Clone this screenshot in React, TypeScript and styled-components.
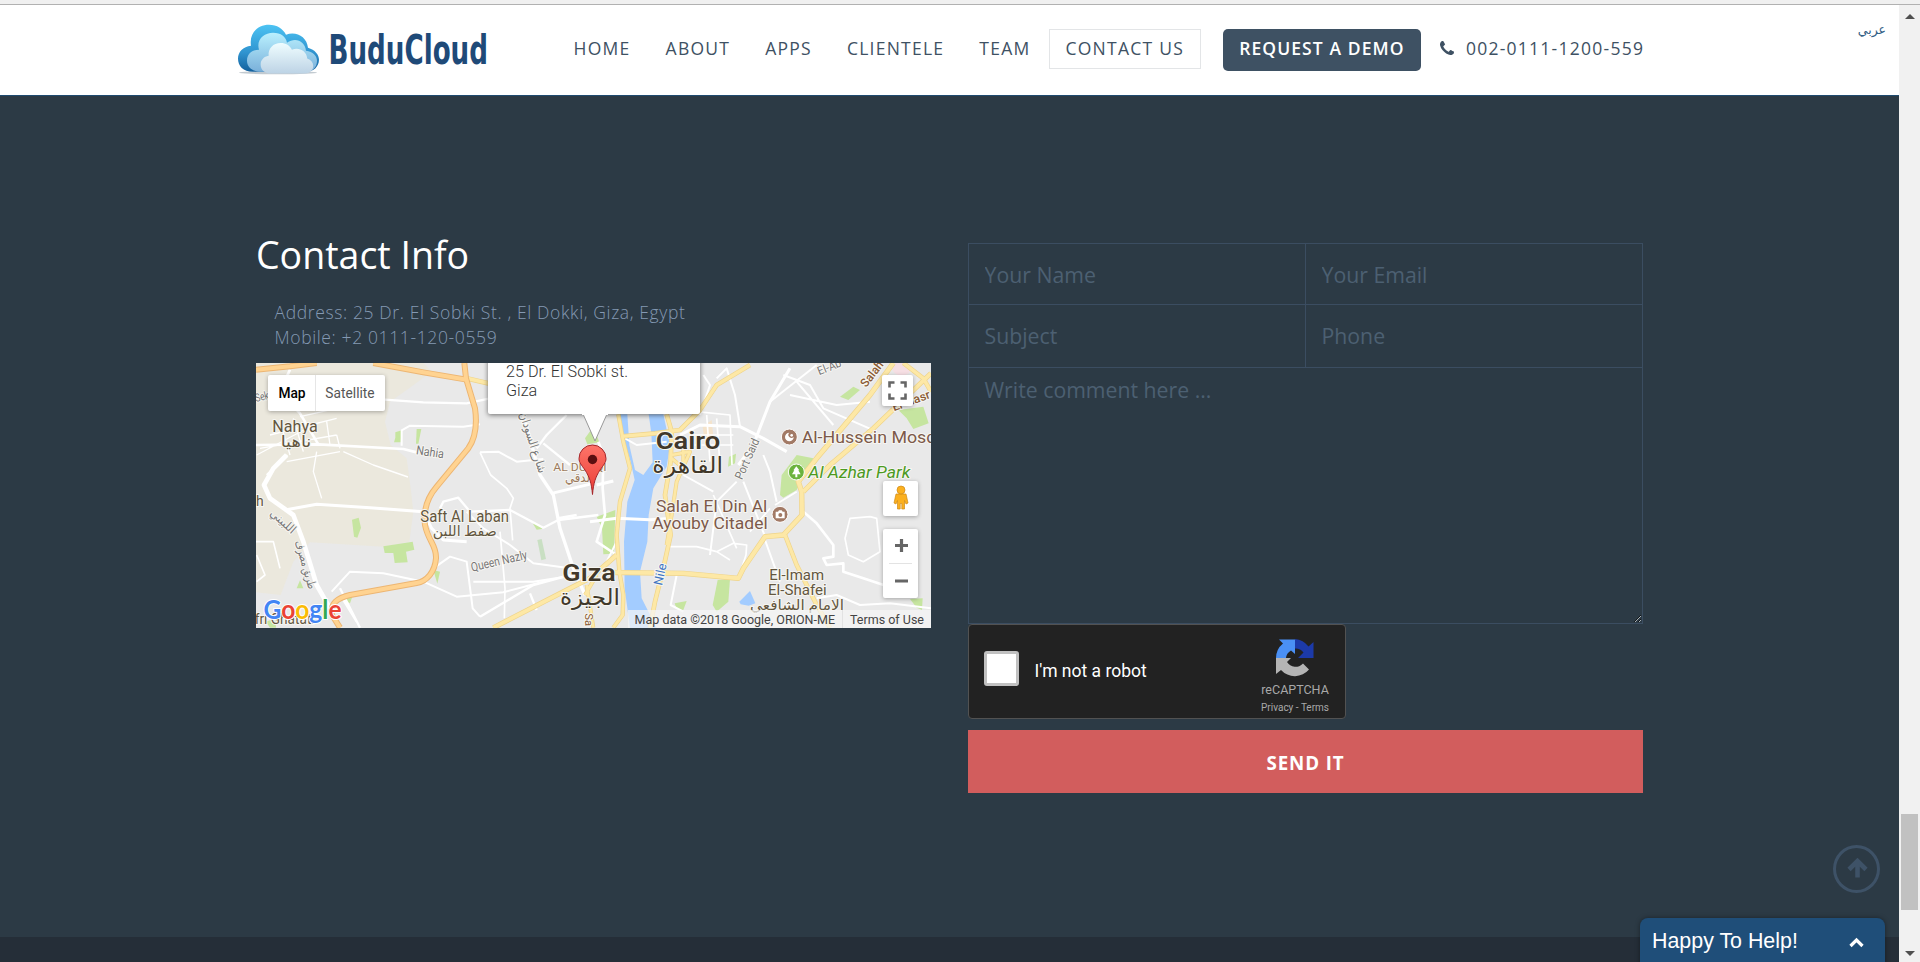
import React from "react";
import styled, { createGlobalStyle, css } from "styled-components";

const sans = `"Open Sans", "DejaVu Sans", sans-serif`;
const roboto = `Roboto, "DejaVu Sans", sans-serif`;

const GlobalStyle = createGlobalStyle`
  * { box-sizing: border-box; }
  html, body { margin: 0; padding: 0; overflow: hidden; background: #2c3a45; }
  body { font-family: ${sans}; }
`;

const Screen = styled.div`
  width: 1920px;
  height: 962px;
  overflow: hidden;
  display: flex;
  flex-direction: column;
`;
const TopStrip = styled.div`
  height: 5px;
  flex: none;
  background: #f0f0f0;
  border-bottom: 1px solid #b1b1b1;
`;
const Viewport = styled.div`
  flex: 1;
  display: flex;
  min-height: 0;
`;
const Page = styled.div`
  width: 1899px;
  position: relative;
  display: flex;
  flex-direction: column;
  background: #2c3a45;
`;

const Header = styled.header`
  height: 91px;
  flex: none;
  display: flex;
  align-items: flex-start;
  background: #fff;
  border-bottom: 1px solid #1f4b70;
  padding: 15px 13px 0 234px;
`;
const Brand = styled.a`
  display: block;
  width: 256px;
  height: 70px;
`;
const Nav = styled.nav`
  display: flex;
  gap: 1.8px;
  margin: 9px 0 0 67px;
`;
const navText = css`
  font-size: 17.5px;
  letter-spacing: 1.25px;
  color: #3e5163;
  white-space: nowrap;
`;
const NavItem = styled.a<{ $active?: boolean }>`
  ${navText}
  height: 40px;
  line-height: 37px;
  padding: 0 15.6px;
  font-weight: 500;
  border: 1px solid ${(p) => (p.$active ? "#e3e5e7" : "transparent")};
`;
const DemoButton = styled.a`
  ${navText}
  height: 42px;
  width: 198px;
  line-height: 39px;
  margin: 9px 0 0 22.3px;
  border-radius: 5px;
  background: #3e5163;
  color: #fff;
  font-weight: 650;
  letter-spacing: 1.1px;
  text-align: center;
`;
const Phone = styled.a`
  ${navText}
  display: flex;
  align-items: center;
  gap: 12px;
  margin: 9px 0 0 19px;
  height: 38px;
  font-weight: 500;
`;
const Language = styled.a`
  margin: 0 0 0 auto;
  font-family: "DejaVu Sans", sans-serif;
  font-size: 12.5px;
  line-height: 20px;
  color: #336085;
`;

const Content = styled.main`
  flex: 1;
  display: flex;
  padding: 125px 256px 0;
  gap: 37px;
`;
const Info = styled.section`
  width: 675px;
`;
const Title = styled.h3`
  margin: 8px 0 0;
  height: 52px;
  line-height: 52px;
  font-size: 37.5px;
  font-weight: 400;
  color: #fff;
`;
const Address = styled.p`
  margin: 19px 0 13px 18.5px;
  height: 50px;
  line-height: 25px;
  font-size: 17.5px;
  font-weight: 300;
  letter-spacing: 0.63px;
  color: #8499b3;
`;

const MapFrame = styled.div`
  position: relative;
  width: 675px;
  height: 265px;
  overflow: hidden;
  background: #e9e9e9;
  font-family: ${roboto};
`;
const MapArt = styled.svg`
  display: block;
`;
const MapTypes = styled.div`
  position: absolute;
  left: 12px;
  top: 12px;
  height: 36px;
  display: flex;
  background: #fff;
  border-radius: 2px;
  box-shadow: 0 1px 4px rgba(0, 0, 0, 0.3);
`;
const MapType = styled.span<{ $on?: boolean }>`
  width: ${(p) => (p.$on ? 47 : 70)}px;
  text-align: center;
  line-height: 36px;
  font-size: 13.75px;
  font-weight: ${(p) => (p.$on ? 500 : 400)};
  color: ${(p) => (p.$on ? "#000" : "#565656")};
  border-left: ${(p) => (p.$on ? "0" : "1px solid #e6e6e6")};
  text-indent: ${(p) => (p.$on ? "1px" : "-1px")};
`;
const MapControl = styled.div<{ $x: number; $y: number; $w: number; $h: number }>`
  position: absolute;
  left: ${(p) => p.$x}px;
  top: ${(p) => p.$y}px;
  width: ${(p) => p.$w}px;
  height: ${(p) => p.$h}px;
  background: #fff;
  border-radius: 2px;
  box-shadow: 0 1px 4px rgba(0, 0, 0, 0.3);
  svg { display: block; }
`;
const Bubble = styled.div`
  position: absolute;
  left: 232px;
  top: -30px;
  width: 212px;
  height: 81px;
  padding: 29px 17px 0 18px;
  background: #fff;
  border-radius: 2px;
  box-shadow: 0 1px 5px rgba(0, 0, 0, 0.55);
  font-size: 16.2px;
  font-weight: 300;
  line-height: 19px;
  color: #333;
`;
const BubbleTail = styled.svg`
  position: absolute;
  left: 322px;
  top: 50px;
`;
const Pin = styled.svg`
  position: absolute;
  left: 321px;
  top: 80px;
`;
const Credits = styled.div`
  position: absolute;
  right: 0;
  bottom: 0;
  height: 18px;
  display: flex;
  background: rgba(245, 245, 245, 0.72);
  font-size: 12.5px;
  line-height: 19px;
  color: #444;
  span { padding: 0 7px; }
  span + span { border-left: 1px solid #e2e2e2; }
`;
const GoogleMark = styled.svg`
  position: absolute;
  left: 7px;
  bottom: 0;
  overflow: visible;
`;

const Form = styled.form`
  width: 675px;
  padding-top: 22px;
`;
const Fields = styled.div`
  display: grid;
  grid-template-columns: 337px 337px;
  grid-template-rows: 61px 63px 257px;
  border-top: 1px solid #3b4d61;
  border-left: 1px solid #3b4d61;
  height: 381px;
`;
const fieldStyle = css`
  width: 100%;
  height: 100%;
  border: 0 solid #3b4d61;
  border-width: 0 1px 1px 0;
  border-radius: 0;
  background: transparent;
  font-family: ${sans};
  font-size: 21.25px;
  outline: none;
  color: #4e6072;
  &::placeholder { color: #4c6072; opacity: 1; }
`;
const Field = styled.input<{ $lift?: boolean }>`
  ${fieldStyle}
  padding: 0 15px ${(p) => (p.$lift ? 2 : 0)}px 15.5px;
`;
const Comment = styled.textarea`
  ${fieldStyle}
  display: block;
  padding: 6.5px 15px 0 15.5px;
  grid-column: 1 / 3;
  height: 256px;
  resize: vertical;
`;
const Captcha = styled.div`
  width: 378px;
  height: 95px;
  display: flex;
  background: #222;
  border: 1px solid #525252;
  border-radius: 4px;
  font-family: ${roboto};
`;
const CheckBox = styled.span`
  width: 35px;
  height: 35px;
  margin: 26px 0 0 15px;
  background: #fff;
  border: 3px solid #c1c1c1;
  border-radius: 3px;
`;
const CaptchaLabel = styled.span`
  margin: 34px 0 0 15.5px;
  line-height: 24px;
  font-size: 17.5px;
  font-weight: 400;
  color: #fff;
`;
const CaptchaBrand = styled.div`
  margin: 14px 16px 0 auto;
  display: flex;
  flex-direction: column;
  align-items: center;
  color: #a9a9a9;
  font-size: 12.5px;
  line-height: 15px;
  svg { margin: 0 0 5px 0; }
  small { font-size: 10px; line-height: 12px; margin-top: 5px; }
`;
const Send = styled.button`
  display: block;
  width: 675px;
  height: 63px;
  margin-top: 11px;
  padding: 1px 0 0;
  border: 0;
  background: #d25d5d;
  color: #fff;
  font-family: ${sans};
  font-size: 18.75px;
  font-weight: 700;
  letter-spacing: 0.9px;
`;
const Footer = styled.footer`
  height: 25px;
  flex: none;
  background: #252e38;
`;

const ToTop = styled.a`
  position: absolute;
  left: 1833px;
  top: 840px;
  width: 47px;
  height: 48px;
  border: 3px solid #3e5267;
  border-radius: 50%;
  display: flex;
  align-items: center;
  justify-content: center;
  padding: 0 0 3px 2px;
`;
const Chat = styled.div`
  position: absolute;
  left: 1640px;
  top: 913px;
  width: 245px;
  height: 52px;
  padding: 0 21px 0 12px;
  display: flex;
  justify-content: space-between;
  align-items: flex-start;
  background: #1f4e79;
  border-radius: 8px 8px 0 0;
  box-shadow: 0 0 5px rgba(0, 0, 0, 0.4);
  color: #fff;
  font-family: "Liberation Sans", sans-serif;
  font-size: 21.4px;
  line-height: 46px;
  svg { margin-top: 19px; }
`;

const ScrollBar = styled.div`
  width: 21px;
  display: flex;
  flex-direction: column;
  align-items: center;
  background: #f1f1f1;
`;
const ScrollArrow = styled.svg`
  margin-top: 9px;
`;
const Thumb = styled.div`
  width: 17px;
  height: 96px;
  margin-top: 795px;
  margin-bottom: 32px;
  background: #c1c1c1;
`;

const CLOUD =
  "M16 46C7 46 1 40 1 33C1 26 6 21 13 20C12 9 20 1 31 1C39 1 45 5 48 11C58 7 70 12 71 24C77 26 80 30 80 35C80 42 74 46 68 46Z";

function Logo() {
  return (
    <svg width="256" height="70" viewBox="0 0 256 70" overflow="visible">
      <defs>
        <linearGradient id="c1" x1="0" y1="0" x2="0" y2="1">
          <stop offset="0" stopColor="#4cc3f3" />
          <stop offset="0.6" stopColor="#2f93cf" />
          <stop offset="1" stopColor="#14609c" />
        </linearGradient>
        <linearGradient id="c2" x1="0" y1="0" x2="0" y2="1">
          <stop offset="0" stopColor="#b9f0fe" />
          <stop offset="1" stopColor="#7ab0da" />
        </linearGradient>
        <linearGradient id="c3" x1="0" y1="0" x2="0" y2="1">
          <stop offset="0" stopColor="#effdff" />
          <stop offset="1" stopColor="#bdd3e5" />
        </linearGradient>
      </defs>
      <g transform="translate(0 0.700)">
        <ellipse cx="44" cy="52" rx="39" ry="1.6" fill="#9aa6b0" opacity="0.6" />
        <path
          d="M19 51C9 51 4 45 4 38C4 31 9 26 17 25C15 12 24 4 35 4C43 4 49 8 52 14C62 10 73 16 74 27C81 29 85 34 85 39C85 46 79 51 73 51Z"
          fill="url(#c1)"
        />
        <path
          d="M27 51C18 51 13 46 13 40C13 33 18 29 25 29C22 19 30 12 39 12C47 12 52 16 53 22C62 16 71 21 72 30C79 31 83 35 83 40C83 47 78 51 72 51Z"
          fill="url(#c2)"
        />
        <g transform="translate(26 21.5) scale(.665 .68)">
          <path d={CLOUD} fill="url(#c3)" />
        </g>
      </g>
      <text
        transform="translate(94.500 43.700) scale(1 1.2)"
        fontFamily="'DejaVu Sans Condensed', 'DejaVu Sans', sans-serif"
        fontWeight="700"
        fontSize="34.5"
        textLength="159.500"
        lengthAdjust="spacingAndGlyphs"
        fill="#1f4a78"
      >
        BuduCloud
      </text>
    </svg>
  );
}

type Label = {
  t: string;
  x: number;
  y: number;
  w?: number;
  s: number;
  c?: string;
  b?: number;
  r?: number;
  i?: boolean;
};

const labels: Label[] = [
  { t: "Nahya", x: 67, y: 231, w: 136, s: 47, c: "#63563f" },
  { t: "ناهيا", x: 92, y: 276, w: 92, s: 46, c: "#63563f" },
  { t: "Sek", x: 18, y: 141, w: 42, s: 34, c: "#777", r: -14 },
  { t: "Nahia", x: 497, y: 298, w: 84, s: 38, c: "#777", r: 8 },
  { t: "Saft Al Laban", x: 511, y: 500, w: 266, s: 47, c: "#63563f" },
  { t: "صفط اللبن", x: 548, y: 543, w: 192, s: 44, c: "#63563f" },
  { t: "h", x: 18, y: 452, s: 42, c: "#63563f" },
  { t: "Queen Nazly", x: 666, y: 650, w: 172, s: 38, c: "#777", r: -13 },
  { t: "شارع السودان", x: 808, y: 176, w: 190, s: 36, c: "#777", r: 72 },
  { t: "طريق مصرف", x: 135, y: 560, w: 150, s: 36, c: "#777", r: 74 },
  { t: "اللبيني", x: 58, y: 478, w: 90, s: 36, c: "#777", r: 42 },
  { t: "AL DUQQI", x: 910, y: 349, w: 160, s: 35, c: "#9c7b5e" },
  { t: "الدقي", x: 945, y: 380, w: 85, s: 38, c: "#9c7b5e" },
  { t: "Giza", x: 937, y: 677, w: 160, s: 69, c: "#41382a", b: 600 },
  { t: "الجيزة", x: 930, y: 750, w: 180, s: 66, c: "#41382a" },
  { t: "Sa", x: 1006, y: 775, s: 34, c: "#8a5a33", r: 90 },
  { t: "Cairo", x: 1217, y: 281, w: 194, s: 69, c: "#41382a", b: 600 },
  { t: "القاهرة", x: 1207, y: 354, w: 212, s: 66, c: "#41382a" },
  { t: "Port Said", x: 1476, y: 376, w: 130, s: 36, c: "#777", r: -66 },
  { t: "El-Ab", x: 1708, y: 61, w: 74, s: 35, c: "#777", r: -22 },
  { t: "Salah", x: 1848, y: 99, w: 88, s: 36, c: "#8a5a33", r: -52, b: 500 },
  { t: "El-Nasr", x: 1932, y: 169, w: 118, s: 36, c: "#8a5a33", r: -20, b: 500 },
  { t: "Al-Hussein Mosque", x: 1655, y: 264, w: 462, s: 49, c: "#7d5a4a" },
  { t: "Al Azhar Park", x: 1675, y: 368, w: 306, s: 49, c: "#4c9a1f", i: true },
  { t: "Salah El Din Al", x: 1218, y: 470, w: 334, s: 50, c: "#7d5a4a" },
  { t: "Ayouby Citadel", x: 1207, y: 522, w: 346, s: 50, c: "#7d5a4a" },
  { t: "El-Imam", x: 1558, y: 675, w: 164, s: 45, c: "#63563f" },
  { t: "El-Shafei", x: 1554, y: 720, w: 176, s: 45, c: "#63563f" },
  { t: "الامام الشافعي", x: 1500, y: 764, w: 282, s: 42, c: "#63563f" },
  { t: "Nile", x: 1236, y: 693, w: 66, s: 38, c: "#3f76c2", r: -78 },
  { t: "afri Ghatati", x: -8, y: 808, w: 202, s: 42, c: "#63563f" },
];

const greens = [
  "M436 232L455 226L452 262L432 262L436 248Z",
  "M500 222L514 222L505 266L498 266Z",
  "M306 494L326 488L333 518L322 548L312 545Z",
  "M400 574L488 560L493 584L468 590L473 622L434 624L430 594L404 594Z",
  "M140 700L150 676L160 700Z",
  "M550 645L570 650L562 686Z",
  "M848 505L874 512L876 522L860 524Z",
  "M280 735L308 722L300 745Z",
  "M48 800L76 790L78 818L60 818Z",
  "M1005 250L1030 215L1048 262L1012 268Z",
  "M1040 485L1096 465L1092 596L1060 598L1056 520Z",
  "M1437 305L1458 296L1455 325L1434 335Z",
  "M1590 420L1595 360L1640 300L1690 310L1640 405L1600 428Z",
  "M1945 165L2020 155L2036 205L1990 222L1970 190Z",
  "M1770 125L1810 95L1830 105L1795 135Z",
  "M1403 675L1440 672L1435 740L1400 770L1388 750Z",
  "M1274 745L1310 738L1300 765L1280 762Z",
  "M1980 732L2018 730L2016 765L2000 758Z",
];

const whites: [string, number][] = [
  ["M120 44L90 110L150 175L205 268", 8],
  ["M18 270L205 268L460 282L500 292", 8],
  ["M110 300L70 340L42 390L60 430L130 480L160 560L200 690L240 760", 14],
  ["M112 300L50 360", 6],
  ["M105 465L200 448L360 458L520 470L545 520L580 555L650 560", 9],
  ["M150 185L260 160M60 240L260 190M30 280L260 240M20 300L190 210M90 200L120 300M130 190L160 290M230 200L240 270M260 240L270 280M110 320L270 290", 4],
  ["M200 290L190 350L215 430M280 290L370 330L474 366", 4],
  ["M18 560L70 560L90 640M20 600L45 660L20 680", 5],
  ["M405 134L520 142L650 145L720 130", 7],
  ["M455 272V226L480 212L640 215L690 208", 6],
  ["M690 292L745 290L800 320L880 312", 6],
  ["M570 460L580 440L625 428L660 470L780 465L880 518L925 495L1045 480", 7],
  ["M690 292L722 360L770 400L790 430L780 460L788 556", 5],
  ["M650 470L700 520L780 570L850 625L960 640", 6],
  ["M750 530L765 700L763 790", 5],
  ["M550 640L600 605L650 620L668 760L690 785M670 680L850 680L980 660", 6],
  ["M245 710L300 650L400 655L520 680L620 725L760 712L880 680", 6],
  ["M690 785L850 690L960 660M840 715L860 765", 7],
  ["M280 735L320 800M330 818L270 700", 7],
  ["M820 180L870 360L910 420L930 520L970 640L1005 720", 10],
  ["M860 280L890 240L950 180M880 265L960 330", 7],
  ["M905 415L1030 385M925 490L980 480M1045 260L1060 300L1058 400L1065 480L1040 560L1100 600", 8],
  ["M1090 378L1040 390M1020 500L1100 490L1200 494L1270 490", 9],
  ["M1060 640L1100 560M1125 250L1160 270L1250 260", 6],
  ["M1350 180L1380 90L1360 60M1400 70L1430 40L1455 120L1470 215", 6],
  ["M1290 240L1350 210L1470 215L1540 250L1610 290", 9],
  ["M1340 170L1440 180L1446 330M1370 180L1380 320M1400 190L1410 330M1330 240L1450 240M1330 270L1450 270", 5],
  ["M1465 330L1510 270L1560 140L1620 40", 9],
  ["M1600 60L1680 90L1720 160L1880 230M1560 140L1700 30M1640 80L1750 210M1620 120L1760 150L1860 140", 6],
  ["M1460 380L1400 440L1380 600M1480 380L1520 480L1545 545M1390 410L1300 360M1540 300L1560 350L1580 440", 6],
  ["M1260 575L1340 575L1400 590L1450 565L1490 570L1488 600L1475 640M1400 590L1440 615M1390 420L1460 580", 5],
  ["M1660 470L1700 505L1750 570L1750 605L1720 610L1730 630L1780 625L1780 650L1840 670L1930 700", 8],
  ["M1860 485L1800 490L1785 550L1795 600L1840 620L1890 590L1880 490L1860 485", 5],
  ["M1545 555L1590 680M1280 660L1262 750L1300 770M1700 730L1760 720L1830 750L1920 745L2043 760", 6],
  ["M1575 450L1640 410M1500 530L1560 460", 5],
];

const yellows: [string, number][] = [
  ["M1105 178L1120 260L1140 340L1110 440L1100 540L1108 650L1120 720L1118 780L1090 818", 9],
  ["M1250 178L1265 230L1262 320L1245 420L1262 540L1240 640L1215 740L1200 818", 10],
  ["M1116 244L1215 235L1290 225L1350 165L1400 90L1500 30", 10],
  ["M1265 300L1320 290L1280 380L1262 500L1250 570M1265 310L1300 340L1300 250", 8],
  ["M1060 652L1300 655L1465 670L1480 640L1545 545L1600 540L1656 480L1655 410L1645 380L1700 310L1860 120L1930 24", 12],
  ["M1660 410L1740 330L1870 220L2043 55", 11],
  ["M1605 540L1640 630L1700 750L1740 818", 10],
  ["M1960 24L2020 70L2043 110", 10],
  ["M730 818L960 700L1020 670L1100 600", 11],
  ["M1010 690L1030 818M1005 720L1040 660", 8],
  ["M650 70L715 85", 11],
];

const oranges = [
  "M18 44L120 34L200 24",
  "M370 24L520 52L650 74",
  "M643 24L648 70L675 160C682 210 676 250 655 280L560 395C530 430 520 470 525 510C535 560 560 570 558 610C555 650 530 680 500 684L300 720C260 730 240 745 246 780L270 818",
];

function MapDrawing() {
  return (
    <MapArt width="675" height="265" viewBox="18 24 2025 795" fill="none" strokeLinejoin="round">
      <rect x="18" y="24" width="2025" height="795" fill="#e9e9e9" />
      <path
        d="M18 24H520L545 50L470 105L420 140L405 200L422 270L470 310L482 400L490 470L478 560L400 575L180 562L130 620L92 720L18 712Z"
        fill="#ebe8dd"
      />
      {greens.map((d) => (
        <path key={d} d={d} fill="#c6e5a0" />
      ))}
      <path d="M862 555L875 552L888 612L874 616Z" fill="#c9dfc3" />
      <path d="M1358 215L1385 195L1390 245L1362 245Z" fill="#f4e3cb" />
      <ellipse cx="1955" cy="40" rx="28" ry="22" fill="#f6dfe4" />
      <path
        d="M1105 178H1132L1138 270L1155 345L1180 360L1208 322L1204 235L1196 178H1240L1260 270L1250 335L1210 400L1196 480L1192 560L1170 650L1175 730L1220 819H1140L1124 700L1122 560L1132 440L1154 375L1142 320L1115 230Z"
        fill="#a3ccff"
      />
      <path d="M1468 740L1500 708L1516 745L1496 752L1472 748Z" fill="#a3ccff" />
      {whites.map(([d, w]) => (
        <path key={d} d={d} stroke="#fff" strokeWidth={w} />
      ))}
      {yellows.map(([d, w]) => (
        <path key={d} d={d} stroke="#efd48a" strokeWidth={w + 4} />
      ))}
      {yellows.map(([d, w]) => (
        <path key={d} d={d} stroke="#fde8a6" strokeWidth={w} />
      ))}
      {oranges.map((d) => (
        <path key={d} d={d} stroke="#edb673" strokeWidth="18" />
      ))}
      {oranges.map((d) => (
        <path key={d} d={d} stroke="#ffd391" strokeWidth="12" />
      ))}
      {labels.map((l) => (
        <text
          key={l.t}
          transform={`translate(${l.x} ${l.y}) rotate(${l.r ?? 0})`}
          fontSize={l.s}
          fontWeight={l.b ?? 400}
          fontStyle={l.i ? "italic" : "normal"}
          textLength={l.w}
          lengthAdjust="spacingAndGlyphs"
          fill={l.c}
          stroke="#f7f6f2"
          strokeWidth="6"
          paintOrder="stroke"
        >
          {l.t}
        </text>
      ))}
      <circle cx="1618" cy="246" r="24" fill="#a27a66" stroke="#fff" strokeWidth="3" />
      <path d="M1618 233A13 13 0 1 0 1631 246A9 9 0 1 1 1618 233" fill="#fff" />
      <circle cx="1625" cy="241" r="4" fill="#fff" />
      <circle cx="1639" cy="351" r="24" fill="#6cb33e" stroke="#fff" strokeWidth="3" />
      <path d="M1639 334L1648 346H1645L1652 358H1642V367H1636V358H1626L1633 346H1630Z" fill="#fff" />
      <circle cx="1590" cy="478" r="24" fill="#a27a66" stroke="#fff" strokeWidth="3" />
      <path d="M1577 470H1584L1587 466H1595L1598 470H1604V490H1577Z" fill="#fff" />
      <circle cx="1591" cy="480" r="6" fill="#a27a66" />
    </MapArt>
  );
}

const googleLetters: [string, string][] = [
  ["G", "#4285f4"],
  ["o", "#ea4335"],
  ["o", "#fbbc05"],
  ["g", "#4285f4"],
  ["l", "#34a853"],
  ["e", "#ea4335"],
];

function GoogleMap() {
  return (
    <MapFrame>
      <MapDrawing />
      <Bubble>
        25 Dr. El Sobki st.
        <br />
        Giza
      </Bubble>
      <BubbleTail width="34" height="34" viewBox="0 0 34 34">
        <path d="M5 1L17 28L29 1" fill="#fff" stroke="#999" strokeWidth="1" />
        <path d="M4 0H30V2H4Z" fill="#fff" />
      </BubbleTail>
      <Pin width="32" height="54" viewBox="0 0 32 54">
        <defs>
          <linearGradient id="pin" x1="0" y1="0" x2="0" y2="1">
            <stop offset="0" stopColor="#fe7569" />
            <stop offset="1" stopColor="#ea3a35" />
          </linearGradient>
        </defs>
        <path
          d="M15.5 51.5C14.5 40 12.500 34 8 27C4.500 22 2 19.500 2 15.500A13.500 13.500 0 0 1 29 15.500C29 19.500 26.500 22 23 27C18.500 34 16.500 40 15.500 51.500Z"
          fill="url(#pin)"
          stroke="#a5262a"
          strokeWidth="1"
        />
        <circle cx="15.500" cy="16.500" r="4.700" fill="#5a0f10" />
      </Pin>
      <MapTypes>
        <MapType $on>Map</MapType>
        <MapType>Satellite</MapType>
      </MapTypes>
      <MapControl $x={626} $y={12} $w={31} $h={31}>
        <svg width="31" height="31" fill="none" stroke="#666" strokeWidth="2.600">
          <path d="M7.500 12.500V7.500H12.500M18.500 7.500H23.500V12.500M23.500 18.500V23.500H18.500M12.500 23.500H7.500V18.500" />
        </svg>
      </MapControl>
      <MapControl $x={627} $y={118} $w={35} $h={35}>
        <svg width="35" height="35" viewBox="0 0 35 35" fill="#fbb01f" stroke="#cf8a17" strokeWidth="0.7">
          <path d="M13 13H23L25 22L23 23L21.500 19.500V28H18.800V22.500H17.200V28H14.500V19.500L13 23L11 22Z" />
          <circle cx="18" cy="9" r="4" />
        </svg>
      </MapControl>
      <MapControl $x={627} $y={166} $w={35} $h={69}>
        <svg width="35" height="69" fill="none" stroke="#666" strokeWidth="3.200">
          <path d="M12 16.500H25M18.500 10V23M12 52H25" />
          <path d="M6 34.500H29" stroke="#e3e3e3" strokeWidth="1" />
        </svg>
      </MapControl>
      <GoogleMark width="82" height="32" viewBox="0 0 82 32">
        <text
          x="0.500"
          y="23"
          fontFamily="Lato, sans-serif"
          fontWeight="700"
          fontSize="27"
          textLength="78"
          lengthAdjust="spacingAndGlyphs"
          stroke="#fff"
          strokeWidth="2"
          paintOrder="stroke"
        >
          {googleLetters.map(([ch, color], i) => (
            <tspan key={i} fill={color}>
              {ch}
            </tspan>
          ))}
        </text>
      </GoogleMark>
      <Credits>
        <span>Map data ©2018 Google, ORION-ME</span>
        <span>Terms of Use</span>
      </Credits>
    </MapFrame>
  );
}

function CaptchaLogo() {
  return (
    <svg width="38" height="38" viewBox="0 0 38 38">
      <path d="M19 0A19 19 0 0 1 32.500 7.500L37.500 3V19H22L27.500 13.500A10 10 0 0 0 19 9.500Z" fill="#1c3aa9" />
      <path d="M0 19A19 19 0 0 1 7 4.500L3 0.500H19V15L15 11.500A10 10 0 0 0 10 19Z" fill="#4a90f5" />
      <path d="M0 19H15L11 23A10 10 0 0 0 27 24.500L33 30.500A18.500 18.500 0 0 1 5 31L0 35Z" fill="#b4b4b4" />
    </svg>
  );
}

const navItems = ["HOME", "ABOUT", "APPS", "CLIENTELE", "TEAM", "CONTACT US"];

export default function App() {
  return (
    <Screen>
      <GlobalStyle />
      <TopStrip />
      <Viewport>
        <Page>
          <Header>
            <Brand>
              <Logo />
            </Brand>
            <Nav>
              {navItems.map((n) => (
                <NavItem key={n} $active={n === "CONTACT US"}>
                  {n}
                </NavItem>
              ))}
            </Nav>
            <DemoButton>REQUEST A DEMO</DemoButton>
            <Phone>
              <svg width="14" height="14" viewBox="0 0 1408 1408" fill="#3e5163">
                <path d="M1408 1112q0 27-10 70.500t-21 68.500q-21 50-122 106q-94 51-186 51q-27 0-53-3.500t-57.500-12.500t-47-14.500t-55.500-20.500t-49-18q-98-35-175-83q-127-79-264-216t-216-264q-48-77-83-175q-3-9-18-49t-20.500-55.500t-14.500-47t-12.500-57.500t-3.500-53q0-92 51-186q56-101 106-122q25-11 68.500-21t70.500-10q14 0 21 3q18 6 53 76q11 19 30 54t35 63.500t31 53.500q3 4 17.500 25t21.500 35.500t7 28.500q0 20-28.500 50t-62 55t-62 53t-28.500 46q0 9 5 22.500t8.500 20.500t14 24t11.500 19q76 137 174 235t235 174q2 1 19 11.500t24 14t20.500 8.500t22.500 5q18 0 46-28.500t53-62t55-62t50-28.500q14 0 28.500 7t35.500 21.500t25 17.500q25 15 53.500 31t63.500 35t54 30q70 35 76 53q3 7 3 21z" />
              </svg>
              002-0111-1200-559
            </Phone>
            <Language>عربي</Language>
          </Header>
          <Content>
            <Info>
              <Title>Contact Info</Title>
              <Address>
                Address: 25 Dr. El Sobki St. , El Dokki, Giza, Egypt
                <br />
                Mobile: +2 0111-120-0559
              </Address>
              <GoogleMap />
            </Info>
            <Form>
              <Fields>
                <Field placeholder="Your Name" />
                <Field placeholder="Your Email" />
                <Field $lift placeholder="Subject" />
                <Field $lift placeholder="Phone" />
                <Comment placeholder="Write comment here ..." />
              </Fields>
              <Captcha>
                <CheckBox />
                <CaptchaLabel>I'm not a robot</CaptchaLabel>
                <CaptchaBrand>
                  <CaptchaLogo />
                  reCAPTCHA
                  <small>Privacy - Terms</small>
                </CaptchaBrand>
              </Captcha>
              <Send type="button">SEND IT</Send>
            </Form>
          </Content>
          <Footer />
          <ToTop>
            <svg width="21" height="20" viewBox="0 0 21 20" fill="none" stroke="#3e5267" strokeWidth="4.600">
              <path d="M10.500 19.500V4M2 11.500L10.500 3L19 11.500" />
            </svg>
          </ToTop>
          <Chat>
            Happy To Help!
            <svg width="15" height="11" viewBox="0 0 15 11" fill="none" stroke="#fff" strokeWidth="3.200">
              <path d="M1.500 9L7.500 3L13.500 9" />
            </svg>
          </Chat>
        </Page>
        <ScrollBar>
          <ScrollArrow width="10" height="5" viewBox="0 0 10 5">
            <path d="M0 5L5 0L10 5Z" fill="#505050" />
          </ScrollArrow>
          <Thumb />
          <ScrollArrow width="10" height="5" viewBox="0 0 10 5">
            <path d="M0 0L5 5L10 0Z" fill="#505050" />
          </ScrollArrow>
        </ScrollBar>
      </Viewport>
    </Screen>
  );
}
